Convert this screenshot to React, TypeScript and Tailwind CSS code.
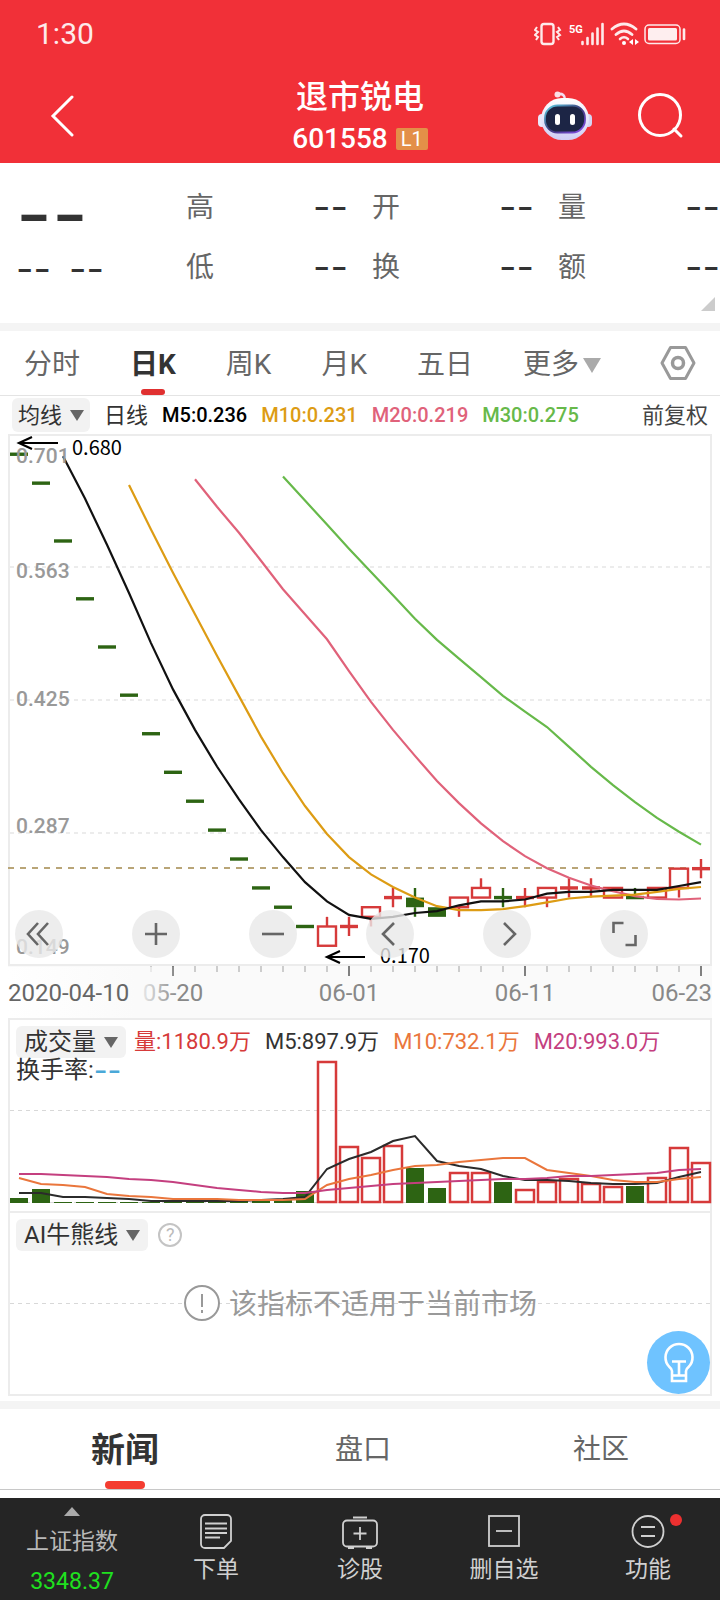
import React, { useState } from 'react';

interface Candle {
  open: number;
  close: number;
  high: number;
  low: number;
}

const STEP = 22;
const BODY = 18;
const TOP_PRICE = 0.701;
const PRICE_RANGE = 0.552;
const PRICE_HEIGHT = 532;

const RED = '#d63a3a';
const GREEN = '#2d6413';

const flat = (price: number): Candle => ({ open: price, close: price, high: price, low: price });
const bar = (open: number, close: number, high: number, low: number): Candle => ({ open, close, high, low });

// closes before the first visible day, only needed for the averages
const earlierCloses = [
  0.94, 0.94, 0.94, 0.94, 0.94, 0.94, 0.86, 0.8, 0.81, 0.8, 0.71, 0.71, 0.85, 0.85, 0.8, 0.75, 0.72,
];

const candles: Candle[] = [
  flat(0.68),
  flat(0.65),
  flat(0.59),
  flat(0.53),
  flat(0.48),
  flat(0.43),
  flat(0.39),
  flat(0.35),
  flat(0.32),
  flat(0.29),
  flat(0.26),
  flat(0.23),
  flat(0.21),
  flat(0.19),
  bar(0.17, 0.19, 0.2, 0.17),
  bar(0.19, 0.19, 0.2, 0.18),
  bar(0.2, 0.21, 0.21, 0.19),
  bar(0.22, 0.22, 0.23, 0.21),
  bar(0.22, 0.21, 0.23, 0.2),
  bar(0.21, 0.2, 0.21, 0.2),
  bar(0.21, 0.22, 0.22, 0.2),
  bar(0.22, 0.23, 0.24, 0.22),
  bar(0.22, 0.22, 0.23, 0.21),
  bar(0.22, 0.22, 0.23, 0.21),
  bar(0.22, 0.23, 0.23, 0.21),
  bar(0.23, 0.23, 0.24, 0.22),
  bar(0.23, 0.23, 0.24, 0.22),
  bar(0.22, 0.23, 0.23, 0.22),
  bar(0.22, 0.22, 0.23, 0.22),
  bar(0.22, 0.23, 0.23, 0.22),
  bar(0.23, 0.25, 0.25, 0.22),
  bar(0.25, 0.25, 0.26, 0.24),
];

// days drawn green; the others are red
const greenDays = [0, 1, 2, 3, 4, 5, 6, 7, 8, 9, 10, 11, 12, 13, 18, 19, 22, 28];

const volumes = [
  5, 14, 1, 1, 1, 1, 1, 1, 1, 1, 3, 4, 4, 12, 141, 56, 45, 57, 35, 15, 30, 30, 21, 13, 21, 24, 19, 16, 17, 25, 55, 40,
];
const volumeAverages = [
  {
    color: '#2b2b2b',
    values: [
      10, 10, 6, 6, 5, 4, 2, 2, 2, 2, 2, 3, 4, 6, 34, 44, 51, 62, 67, 42, 37, 34, 27, 23, 23, 22, 20, 19, 19, 20, 26,
      31,
    ],
  },
  {
    color: '#ea763c',
    values: [
      25, 19, 18, 16, 9, 7, 6, 4, 4, 4, 3, 3, 3, 4, 18, 24, 28, 33, 37, 38, 41, 43, 45, 45, 33, 30, 27, 23, 21, 21, 24,
      26,
    ],
  },
  {
    color: '#c43f7f',
    values: [
      29, 29, 28, 27, 26, 24, 23, 21, 18, 15, 13, 11, 10, 10, 13, 15, 17, 19, 20, 21, 22, 23, 24, 24, 25, 27, 27, 28,
      29, 30, 33, 34,
    ],
  },
];

const dayX = (i: number) => 11 + STEP * i;
const priceY = (price: number) => ((TOP_PRICE - price) / PRICE_RANGE) * PRICE_HEIGHT;

const averageLine = (days: number, from: number) => {
  const closes = [...earlierCloses, ...candles.map((c) => c.close)];
  const points: string[] = [];
  for (let i = from; i < candles.length; i++) {
    const end = i + earlierCloses.length + 1;
    const part = closes.slice(Math.max(0, end - days), end);
    const avg = part.reduce((sum, v) => sum + v, 0) / part.length;
    points.push(`${dayX(i)},${priceY(avg).toFixed(1)}`);
  }
  return points.join(' ');
};

const priceAverages = [
  { days: 30, from: 12, color: '#67b94a' },
  { days: 20, from: 8, color: '#e0627a' },
  { days: 10, from: 5, color: '#dd9c14' },
  { days: 5, from: 2, color: '#111111' },
];

const priceLabels = [
  { text: '0.701', y: 29 },
  { text: '0.563', y: 144 },
  { text: '0.425', y: 272 },
  { text: '0.287', y: 399 },
  { text: '0.149', y: 520 },
];

const StatusIcons = () => (
  <svg width="154" height="28" viewBox="0 0 154 28" fill="none" stroke="#fff" strokeOpacity="0.9">
    <rect x="7.500" y="4" width="12" height="20" rx="2.500" strokeWidth="2.400" />
    <path d="M3 7l-2 3 3 2-3 3 3 2-2 3M24 7l2 3-3 2 3 3-3 2 2 3" strokeWidth="2" />
    <text x="35" y="13" fontSize="11" fontWeight="700" fill="#fff" stroke="none" fontFamily="Roboto, sans-serif">
      5G
    </text>
    <path d="M48.500 22v2M53.500 18v6M58.500 13.500v10.500M63.500 8.500v15.500M68.500 4v20" strokeWidth="2.600" strokeLinecap="round" />
    <path d="M78 9q12-10 24 0M82 14.500q8-7 16 0" strokeWidth="2.800" strokeLinecap="round" />
    <path d="M86 19q4-3.500 8 0" strokeWidth="2.600" strokeLinecap="round" />
    <circle cx="90" cy="23" r="2" fill="#fff" stroke="none" />
    <path d="M99 19v6l-4-3zM101 19v6l4-3z" fill="#fff" stroke="none" />
    <rect x="111" y="5" width="35" height="18.500" rx="4" strokeWidth="1.500" />
    <rect x="114" y="8" width="29" height="12.500" rx="1.500" fill="#fff" fillOpacity="0.92" stroke="none" />
    <path d="M150 9.500v9.500" strokeWidth="2.600" strokeLinecap="round" />
  </svg>
);

const RobotIcon = () => (
  <svg width="54" height="50" viewBox="0 0 54 50" fill="none">
    <defs>
      <linearGradient id="shell" x1="0" y1="0" x2="0" y2="1">
        <stop offset="0" stopColor="#ffffff" />
        <stop offset="1" stopColor="#cfcdf5" />
      </linearGradient>
      <linearGradient id="rim" x1="0" y1="0" x2="1" y2="1">
        <stop offset="0" stopColor="#5fd3e8" />
        <stop offset="0.500" stopColor="#3a3a7a" />
        <stop offset="1" stopColor="#8b4df0" />
      </linearGradient>
    </defs>
    <path d="M20 3q7-1 7 6" stroke="#f3dcf0" strokeWidth="2.600" />
    <circle cx="19.500" cy="3.500" r="3" fill="#fbdfe6" />
    <rect x="0" y="23" width="8" height="13" rx="4" fill="#e9e8fb" />
    <rect x="46" y="23" width="8" height="13" rx="4" fill="#d5d4f3" />
    <rect x="3" y="7" width="48" height="42" rx="21" fill="url(#shell)" />
    <rect x="7" y="14.500" width="40" height="27" rx="12.500" fill="#1c2545" stroke="url(#rim)" strokeWidth="1.800" />
    <rect x="17" y="23" width="5" height="11" rx="2.500" fill="#fff" />
    <rect x="32" y="23" width="5" height="11" rx="2.500" fill="#fff" />
  </svg>
);

const Header = () => (
  <header className="bg-[#f13038] text-white">
    <div className="flex h-[68px] items-center justify-between pl-9 pr-8">
      <span className="text-[30px] leading-8 opacity-90">1:30</span>
      <StatusIcons />
    </div>
    <div className="grid h-[95px] grid-cols-[1fr_auto_1fr] items-center">
      <button aria-label="返回" className="ml-[50px] w-6">
        <svg width="24" height="42" viewBox="0 0 24 42" fill="none" stroke="#fff" strokeWidth="3" strokeLinecap="round">
          <path d="M22 2L3 21l19 19" />
        </svg>
      </button>
      <div className="pt-0.5 text-center">
        <h1 className="text-[32px] font-medium leading-[44px]">退市锐电</h1>
        <div className="flex items-center justify-center gap-2">
          <span className="text-[28px] font-medium leading-10">601558</span>
          <span className="w-8 rounded-xs bg-[#e38f48] text-center text-[20px] leading-[22px]">L1</span>
        </div>
      </div>
      <div className="flex items-center justify-end gap-[46px] pr-9">
        <button aria-label="智能助手">
          <RobotIcon />
        </button>
        <button aria-label="搜索">
          <svg width="46" height="46" viewBox="0 0 46 46" fill="none" stroke="#fff" strokeWidth="3" strokeLinecap="round">
            <circle cx="22" cy="22" r="20.500" />
            <path d="M36 36l7 7" />
          </svg>
        </button>
      </div>
    </div>
  </header>
);

const quoteColumns = [
  ['高', '低'],
  ['开', '换'],
  ['量', '额'],
];

const Quote = () => (
  <section className="relative grid h-40 grid-cols-[186px_186px_186px_1fr] pt-[15px] text-[28px] leading-[60px] text-[#666]">
    <div className="pl-4 font-[Inter,sans-serif] text-[#333]">
      <div className="h-[60px] pt-1.5 text-[78px]">--</div>
      <div className="flex gap-[18px] text-[38px]">
        <span>--</span>
        <span>--</span>
      </div>
    </div>
    {quoteColumns.map((labels) => (
      <dl key={labels[0]}>
        {labels.map((label) => (
          <div key={label} className="flex h-[60px] justify-between">
            <dt>{label}</dt>
            <dd className="pr-6 font-[Inter,sans-serif] text-[38px] leading-[56px] text-[#333] [dl:last-of-type_&]:pr-0">
              --
            </dd>
          </div>
        ))}
      </dl>
    ))}
    <svg className="absolute bottom-3 right-[5px]" width="14" height="14" viewBox="0 0 14 14">
      <path d="M14 0v14H0z" fill="#ccc" />
    </svg>
  </section>
);

const periods = ['分时', '日K', '周K', '月K', '五日'];

const PeriodTabs = () => {
  const [active, setActive] = useState('日K');

  return (
    <nav className="flex h-[65px] items-stretch gap-[50px] border-b border-[#e4e4e4] pl-6 pr-6 text-[28px] text-[#666]">
      {periods.map((period) => (
        <button
          key={period}
          onClick={() => setActive(period)}
          className={`relative whitespace-nowrap pt-1 ${active === period ? 'font-bold text-[#333]' : ''}`}
        >
          {period}
          {active === period && (
            <span className="absolute bottom-0 left-1/2 h-1.5 w-6 -translate-x-1/2 rounded-full bg-[#e03030]" />
          )}
        </button>
      ))}
      <button className="flex items-center gap-1 whitespace-nowrap pt-1">
        更多
        <svg width="18" height="15" viewBox="0 0 18 15">
          <path d="M0 0h18L9 15z" fill="#aaa" />
        </svg>
      </button>
      <button aria-label="设置" className="ml-auto">
        <svg width="36" height="36" viewBox="0 0 36 36" fill="none" stroke="#999" strokeWidth="3" strokeLinejoin="round">
          <path d="M10.500 2.500h15L34 18l-8.500 15.500h-15L2 18z" />
          <circle cx="18" cy="18" r="5.500" strokeWidth="3.500" />
        </svg>
      </button>
    </nav>
  );
};

const Chip = ({ label, className = '' }: { label: string; className?: string }) => (
  <button className={`flex items-center rounded-md bg-[#f2f2f2] text-[#333] ${className}`}>
    {label}
    <svg width="14" height="11" viewBox="0 0 14 11">
      <path d="M0 0h14L7 11z" fill="#666" />
    </svg>
  </button>
);

const AverageBar = () => (
  <div className="flex h-[38px] items-center gap-[14px] px-3 text-[20px] font-medium">
    <Chip label="均线" className="h-[34px] gap-2 px-1.5 text-[22px] font-normal" />
    <span className="text-[22px] font-normal text-[#333]">日线</span>
    <span className="text-black">M5:0.236</span>
    <span className="text-[#dd9c14]">M10:0.231</span>
    <span className="text-[#e0627a]">M20:0.219</span>
    <span className="text-[#67b94a]">M30:0.275</span>
    <button className="ml-auto text-[22px] font-normal text-[#444]">前复权</button>
  </div>
);

const CandleShape = ({ candle, index }: { candle: Candle; index: number }) => {
  const x = dayX(index);
  const green = greenDays.includes(index);
  const color = green ? GREEN : RED;
  const top = priceY(Math.max(candle.open, candle.close));
  const bottom = priceY(Math.min(candle.open, candle.close));

  return (
    <g stroke={color} strokeWidth="2.400">
      {candle.high > candle.low && (
        <path d={`M${x} ${priceY(candle.high)}V${top}M${x} ${bottom}V${priceY(candle.low)}`} />
      )}
      {candle.open === candle.close ? (
        <path d={`M${x - BODY / 2} ${top}h${BODY}`} strokeWidth="3.400" />
      ) : green ? (
        <rect x={x - BODY / 2} y={top} width={BODY} height={bottom - top} fill={GREEN} stroke="none" />
      ) : (
        <rect x={x - BODY / 2} y={top} width={BODY} height={bottom - top} fill="#fff" />
      )}
    </g>
  );
};

const PriceChart = () => (
  <svg className="block w-full overflow-visible" viewBox="0 0 704 584" fontFamily="Roboto, sans-serif" fill="none">
    <defs>
      <linearGradient id="axisFade">
        <stop offset="0" stopColor="#fff" />
        <stop offset="0.750" stopColor="#fafafa" />
        <stop offset="1" stopColor="#fafafa" stopOpacity="0" />
      </linearGradient>
    </defs>
    <rect x="1" y="1" width="702" height="530" stroke="#ececec" strokeWidth="2" />
    {[133, 266, 399].map((y) => (
      <path key={y} d={`M2 ${y}H702`} stroke="#ececec" strokeWidth="2" strokeDasharray="4 4" />
    ))}
    <path d="M0 434H702" stroke="#b9a577" strokeWidth="2" strokeDasharray="6 6" />

    {candles.map((candle, i) => (
      <CandleShape key={i} candle={candle} index={i} />
    ))}
    {priceAverages.map((line) => (
      <polyline key={line.days} points={averageLine(line.days, line.from)} stroke={line.color} strokeWidth="2.200" />
    ))}

    {priceLabels.map((label) => (
      <text key={label.text} x="8" y={label.y} fontSize="21" fontWeight="500" fill="#999">
        {label.text}
      </text>
    ))}

    {/* highest and lowest price marks */}
    <path d="M50 9H11M24 3L11 9l13 6" stroke="#000" strokeWidth="2.200" />
    <path d="M357 523H319M332 517l-13 6 13 6" stroke="#000" strokeWidth="2.200" />
    <g fontFamily="'Noto Sans CJK SC', sans-serif" fontSize="20" fill="#000">
      <text x="64" y="21">0.680</text>
      <text x="372" y="529">0.170</text>
    </g>

    {/* time axis */}
    <rect x="0" y="532" width="704" height="52" fill="#fafafa" />
    {candles.map((_, i) =>
      i < 6 ? null : (
        <path
          key={i}
          d={`M${dayX(i)} 532v${i % 8 === 7 ? 10 : 6}`}
          stroke={i % 8 === 7 ? '#808080' : '#a0a0a0'}
          strokeWidth={i % 8 === 7 ? 2 : 1}
        />
      )
    )}
    <g fontSize="24" fill="#888" textAnchor="middle">
      <text x="165" y="567">05-20</text>
      <text x="341" y="567">06-01</text>
      <text x="517" y="567">06-11</text>
      <text x="704" y="567" textAnchor="end">
        06-23
      </text>
    </g>
    <rect x="0" y="533" width="170" height="51" fill="url(#axisFade)" />
    <text x="0" y="567" fontSize="24" fill="#666">
      2020-04-10
    </text>
  </svg>
);

const chartTools = [
  { name: '最早', path: 'M23 13L13 24l10 11M33 13L23 24l10 11' },
  { name: '放大', path: 'M13 24h22M24 13v22' },
  { name: '缩小', path: 'M13 24h22' },
  { name: '左移', path: 'M28 13L17 24l11 11' },
  { name: '右移', path: 'M21 13l11 11-11 11' },
  { name: '全屏', path: 'M13.500 23v-10h10M35.500 25v10h-10' },
];

const ChartTools = () => (
  <div className="absolute bottom-[60px] left-[7px] flex gap-[69px]">
    {chartTools.map((tool) => (
      <button key={tool.name} aria-label={tool.name} className="size-12 rounded-full bg-[#e8e8e8]/80">
        <svg width="48" height="48" viewBox="0 0 48 48" fill="none" stroke="#666" strokeWidth="2.600">
          <path d={tool.path} />
        </svg>
      </button>
    ))}
  </div>
);

const VolumePanel = () => (
  <div className="relative border-x-2 border-t-2 border-[#ececec]">
    <svg className="-mx-0.5 block w-[calc(100%+4px)]" viewBox="0 0 704 191" fill="none">
      <path d="M2 90.500H702M2 182.500H702" stroke="#d8d8d8" strokeDasharray="4 4" />
      {volumes.map((volume, i) =>
        greenDays.includes(i) ? (
          <rect key={i} x={dayX(i) - 9} y={183 - volume} width="18" height={volume} fill={GREEN} />
        ) : (
          <rect key={i} x={dayX(i) - 9} y={183 - volume} width="18" height={volume - 1} stroke={RED} strokeWidth="2.500" />
        )
      )}
      {volumeAverages.map((line) => (
        <polyline
          key={line.color}
          points={line.values.map((v, i) => `${dayX(i)},${183 - v}`).join(' ')}
          stroke={line.color}
          strokeWidth="2"
        />
      ))}
    </svg>
    <div className="absolute left-1.5 top-1.5 text-[24px] text-[#333]">
      <div className="flex items-center gap-[14px] whitespace-nowrap text-[22px] leading-8">
        <Chip label="成交量" className="-mr-1.5 h-8 gap-2 px-2 text-[24px]" />
        <span className="text-[#d63a3a]">量:1180.9万</span>
        <span>M5:897.9万</span>
        <span className="text-[#ea763c]">M10:732.1万</span>
        <span className="text-[#c43f7f]">M20:993.0万</span>
      </div>
      <div className="flex h-6 items-center leading-6">
        换手率:<span className="font-[Inter,sans-serif] text-[30px] text-[#4aa8d8]">--</span>
      </div>
    </div>
  </div>
);

const IndicatorPanel = () => (
  <div className="relative h-[185px] border-2 border-[#ececec] px-1.5 pt-1.5">
    <div className="flex items-center gap-2.5">
      <Chip label="AI牛熊线" className="h-8 gap-2 px-2 text-[24px]" />
      <button
        aria-label="指标说明"
        className="size-6 rounded-full border-2 border-[#c4c4c4] text-[18px] leading-5 text-[#bbb]"
      >
        ?
      </button>
    </div>
    <div className="-mx-1.5 mt-8 grid items-center">
      <svg className="col-start-1 row-start-1 h-px w-full">
        <path d="M0 .5H2000" stroke="#d8d8d8" strokeDasharray="4 4" />
      </svg>
      <p className="col-start-1 row-start-1 flex h-10 items-center justify-center gap-2 text-[28px] text-[#999]">
        <svg width="38" height="38" viewBox="0 0 38 38" fill="none" stroke="#999" strokeWidth="2">
          <circle cx="19" cy="19" r="17" fill="#fff" />
          <path d="M19 10v13M19 26v3" />
        </svg>
        <span className="pt-1">该指标不适用于当前市场</span>
      </p>
    </div>
    <button
      aria-label="提示"
      className="absolute bottom-0 right-0 flex size-[63px] items-center justify-center rounded-full bg-[#6fc3ff]"
    >
      <svg width="32" height="42" viewBox="0 0 32 42" fill="none" stroke="#fff" strokeWidth="2.600">
        <path d="M9 39V29Q9 27 6 24.500A13.500 13.500 0 1 1 26 24.500Q23 27 23 29v10z" />
        <path d="M9 33.500h14M16 33V20M9 19.500h14" />
      </svg>
    </button>
  </div>
);

const InfoTabs = () => {
  const [active, setActive] = useState('新闻');

  return (
    <nav className="grid h-[81px] grid-cols-3 border-b border-[#c8c8c8] pl-1.5">
      {['新闻', '盘口', '社区'].map((tab) => (
        <button
          key={tab}
          onClick={() => setActive(tab)}
          className={`relative pt-0.5 ${active === tab ? 'text-[34px] font-bold text-[#333]' : 'text-[28px] text-[#666]'}`}
        >
          {tab}
          {active === tab && (
            <span className="absolute bottom-0 left-1/2 h-2 w-10 -translate-x-1/2 rounded-full bg-[#f43d31]" />
          )}
        </button>
      ))}
    </nav>
  );
};

const actions = [
  {
    name: '下单',
    icon: (
      <>
        <path d="M7 3h22a4 4 0 0 1 4 4v22l-7 7H7a4 4 0 0 1-4-4V7a4 4 0 0 1 4-4z" />
        <path d="M7 11.500h22M7 16.500h22M7 21h22M7 25.500h15" />
      </>
    ),
  },
  {
    name: '诊股',
    icon: (
      <>
        <rect x="1" y="8.500" width="34" height="26" rx="4" />
        <path d="M11 5.500h14M18 15v13M11.500 21.500h13M6 36h6M24 36h6" />
      </>
    ),
  },
  {
    name: '删自选',
    icon: (
      <>
        <rect x="3" y="4" width="30" height="30" />
        <path d="M10 19h16" />
      </>
    ),
  },
  {
    name: '功能',
    icon: (
      <>
        <circle cx="18" cy="19.500" r="15.500" />
        <path d="M11 15h14M11 24h14" />
      </>
    ),
  },
];

const BottomBar = () => (
  <footer className="grid h-[102px] grid-cols-5 bg-[#252525] text-[23px] text-[#d0d0d0]">
    <button className="flex flex-col items-center pt-[9px] text-[#b8b8b8]">
      <svg width="16" height="9" viewBox="0 0 16 9">
        <path d="M8 0l8 9H0z" fill="#aaa" />
      </svg>
      <span className="mt-2 leading-9">上证指数</span>
      <span className="mt-1 leading-9 text-[#1fe01f]">3348.37</span>
    </button>
    {actions.map((action) => (
      <button key={action.name} className="flex flex-col items-center pt-[14px]">
        <span className="relative">
          <svg width="36" height="38" viewBox="0 0 36 38" fill="none" stroke="#d0d0d0" strokeWidth="1.800">
            {action.icon}
          </svg>
          {action.name === '功能' && (
            <span className="absolute -right-4 top-0.5 size-3 rounded-full bg-[#ec3030]" />
          )}
        </span>
        <span className="mt-0.5 leading-9">{action.name}</span>
      </button>
    ))}
  </footer>
);

const App: React.FC = () => {
  return (
    <div className="bg-white font-[Roboto,'Noto_Sans_CJK_SC',sans-serif]">
      <Header />
      <Quote />
      <div className="h-2 bg-[#f4f4f4]" />
      <PeriodTabs />
      <AverageBar />
      <main className="px-2">
        <div className="relative">
          <PriceChart />
          <ChartTools />
        </div>
        <VolumePanel />
        <IndicatorPanel />
      </main>
      <div className="mt-[5px] h-2 bg-[#f4f4f4]" />
      <InfoTabs />
      <div className="h-2" />
      <BottomBar />
    </div>
  );
};

export default App;
